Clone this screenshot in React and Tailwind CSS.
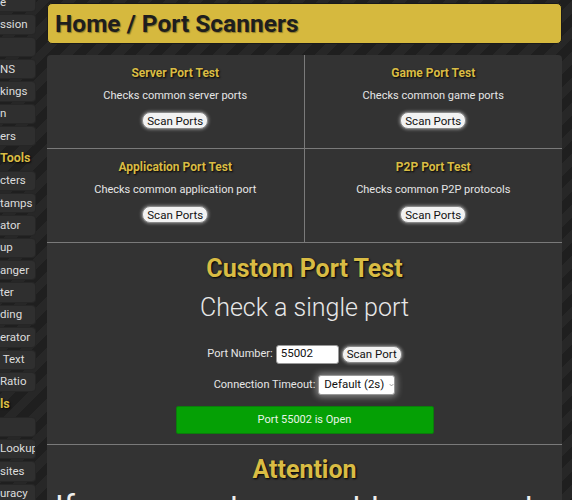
import React from "react";

const side = [
  { t: "e" },
  { t: "ssion" },
  { t: "" },
  { t: "NS" },
  { t: "kings" },
  { t: "n" },
  { t: "ers" },
  { t: "Tools", h: true },
  { t: "cters" },
  { t: "tamps" },
  { t: "ator" },
  { t: "up" },
  { t: "anger" },
  { t: "ter" },
  { t: "ding" },
  { t: "erator" },
  { t: " Text" },
  { t: "Ratio" },
  { t: "ls", h: true },
  { t: "" },
  { t: "Lookup" },
  { t: "sites" },
  { t: "uracy" },
];

const cells = [
  ["Server Port Test", "Checks common server ports"],
  ["Game Port Test", "Checks common game ports"],
  ["Application Port Test", "Checks common application port"],
  ["P2P Port Test", "Checks common P2P protocols"],
];

function Btn({ children, className = "" }) {
  return (
    <button
      className={
        "bg-[#f2f2f2] text-[#111] border border-[#888] rounded-[8px] px-[4px] text-[11.5px] leading-[14px] whitespace-nowrap shadow-[0_0_3px_1px_rgba(255,255,255,0.35)] " +
        className
      }
    >
      {children}
    </button>
  );
}

export default function App() {
  return (
    <div
      className="w-[572px] h-[500px] overflow-hidden flex bg-[repeating-linear-gradient(135deg,#1f1f1f_0px,#1f1f1f_9px,#272727_9px,#272727_18px)] text-white"
      style={{ fontFamily: "Roboto, 'Noto Sans', sans-serif" }}
    >
      <div className="w-[36px] shrink-0 flex flex-col gap-[2px] mt-[-8px] overflow-hidden">
        {side.map((s, i) =>
          s.h ? (
            <div
              key={i}
              className="h-[20.35px] shrink-0 flex items-center text-[12.5px] font-bold text-[#d9bc44] whitespace-nowrap [text-shadow:1px_1px_2px_#000]"
            >
              {s.t}
            </div>
          ) : (
            <div
              key={i}
              className="h-[20.35px] shrink-0 flex items-center text-[11.5px] text-[#ddd] whitespace-pre bg-[#2f2f2f] rounded-r-[4px] border border-l-0 border-[#262626] overflow-hidden"
            >
              {s.t}
            </div>
          )
        )}
      </div>
      <div className="ml-[11px] w-[515px] shrink-0 flex flex-col">
        <div className="mt-[3px] h-[41px] shrink-0 bg-[#d6b93e] border border-[#1a1a1a] rounded-[5px] flex items-center pl-[7px] pt-[2px]">
          <span className="text-[24.5px] font-bold text-[#1e1e1e] leading-none [text-shadow:1px_1px_1px_rgba(0,0,0,0.35)]">
            Home / Port Scanners
          </span>
        </div>
        <div className="mt-[11px] bg-[#333333] rounded-t-[4px] flex-1">
          <div className="grid grid-cols-2">
            {cells.map(([t, d], i) => (
              <div
                key={i}
                className={
                  "h-[94px] flex flex-col items-center pt-[10px] border-b border-[#7a7a7a] " +
                  (i % 2 === 0 ? "border-r" : "")
                }
              >
                <div className="text-[12px] font-bold leading-[16px] text-[#d9bc44] [text-shadow:1px_1px_2px_#000]">
                  {t}
                </div>
                <div className="mt-[7px] text-[11px] leading-[16px] text-[#e6e6e6]">{d}</div>
                <Btn className="mt-[8px] h-[17px]">Scan Ports</Btn>
              </div>
            ))}
          </div>
          <div className="flex flex-col items-center pt-[12px] pb-[10px] border-b border-[#7a7a7a]">
            <div className="text-[25px] font-bold leading-[28px] text-[#d9bc44] [text-shadow:1px_1px_2px_#000]">
              Custom Port Test
            </div>
            <div className="mt-[10px] text-[25px] font-light leading-[30px] text-[#e8e8e8]">Check a single port</div>
            <div className="mt-[21px] h-[20px] flex items-center">
              <span className="text-[11px] text-[#e6e6e6] mr-[3px]">Port Number:</span>
              <div className="w-[63px] h-[19px] bg-white rounded-[3px] border border-[#999] flex items-center pl-[4px] text-[11.5px] text-[#111]">
                55002
              </div>
              <Btn className="ml-[3px] h-[17px]">Scan Port</Btn>
            </div>
            <div className="mt-[11px] h-[20px] flex items-center">
              <span className="text-[11px] text-[#e6e6e6] mr-[3px]">Connection Timeout:</span>
              <div className="w-[77px] h-[20px] bg-white rounded-[3px] border border-[#999] flex items-center pl-[5px] text-[11.5px] text-[#111] whitespace-nowrap shadow-[0_0_6px_2px_rgba(255,255,255,0.4)]">
                <span>Default (2s)</span>
                <svg width="8" height="6" viewBox="0 0 8 6" className="ml-[5px]">
                  <path d="M1 1.5 L4 4.5 L7 1.5" stroke="#666" strokeWidth="1" fill="none" />
                </svg>
              </div>
            </div>
            <div className="mt-[11px] w-[258px] h-[28px] bg-[#05a005] border border-[#0b7d0b] rounded-[2px] flex items-center justify-center text-[11px] text-[#e8f5e8]">
              Port 55002 is Open
            </div>
          </div>
          <div className="flex flex-col items-center pt-[11px]">
            <div className="text-[25px] font-bold leading-[28px] text-[#d9bc44] [text-shadow:1px_1px_2px_#000]">
              Attention
            </div>
            <div className="mt-[2px] px-[8px] self-stretch text-[32px] leading-[40px] text-[#eee] whitespace-nowrap overflow-hidden">
              If you cannot connect to your port using this
            </div>
          </div>
        </div>
      </div>
    </div>
  );
}
